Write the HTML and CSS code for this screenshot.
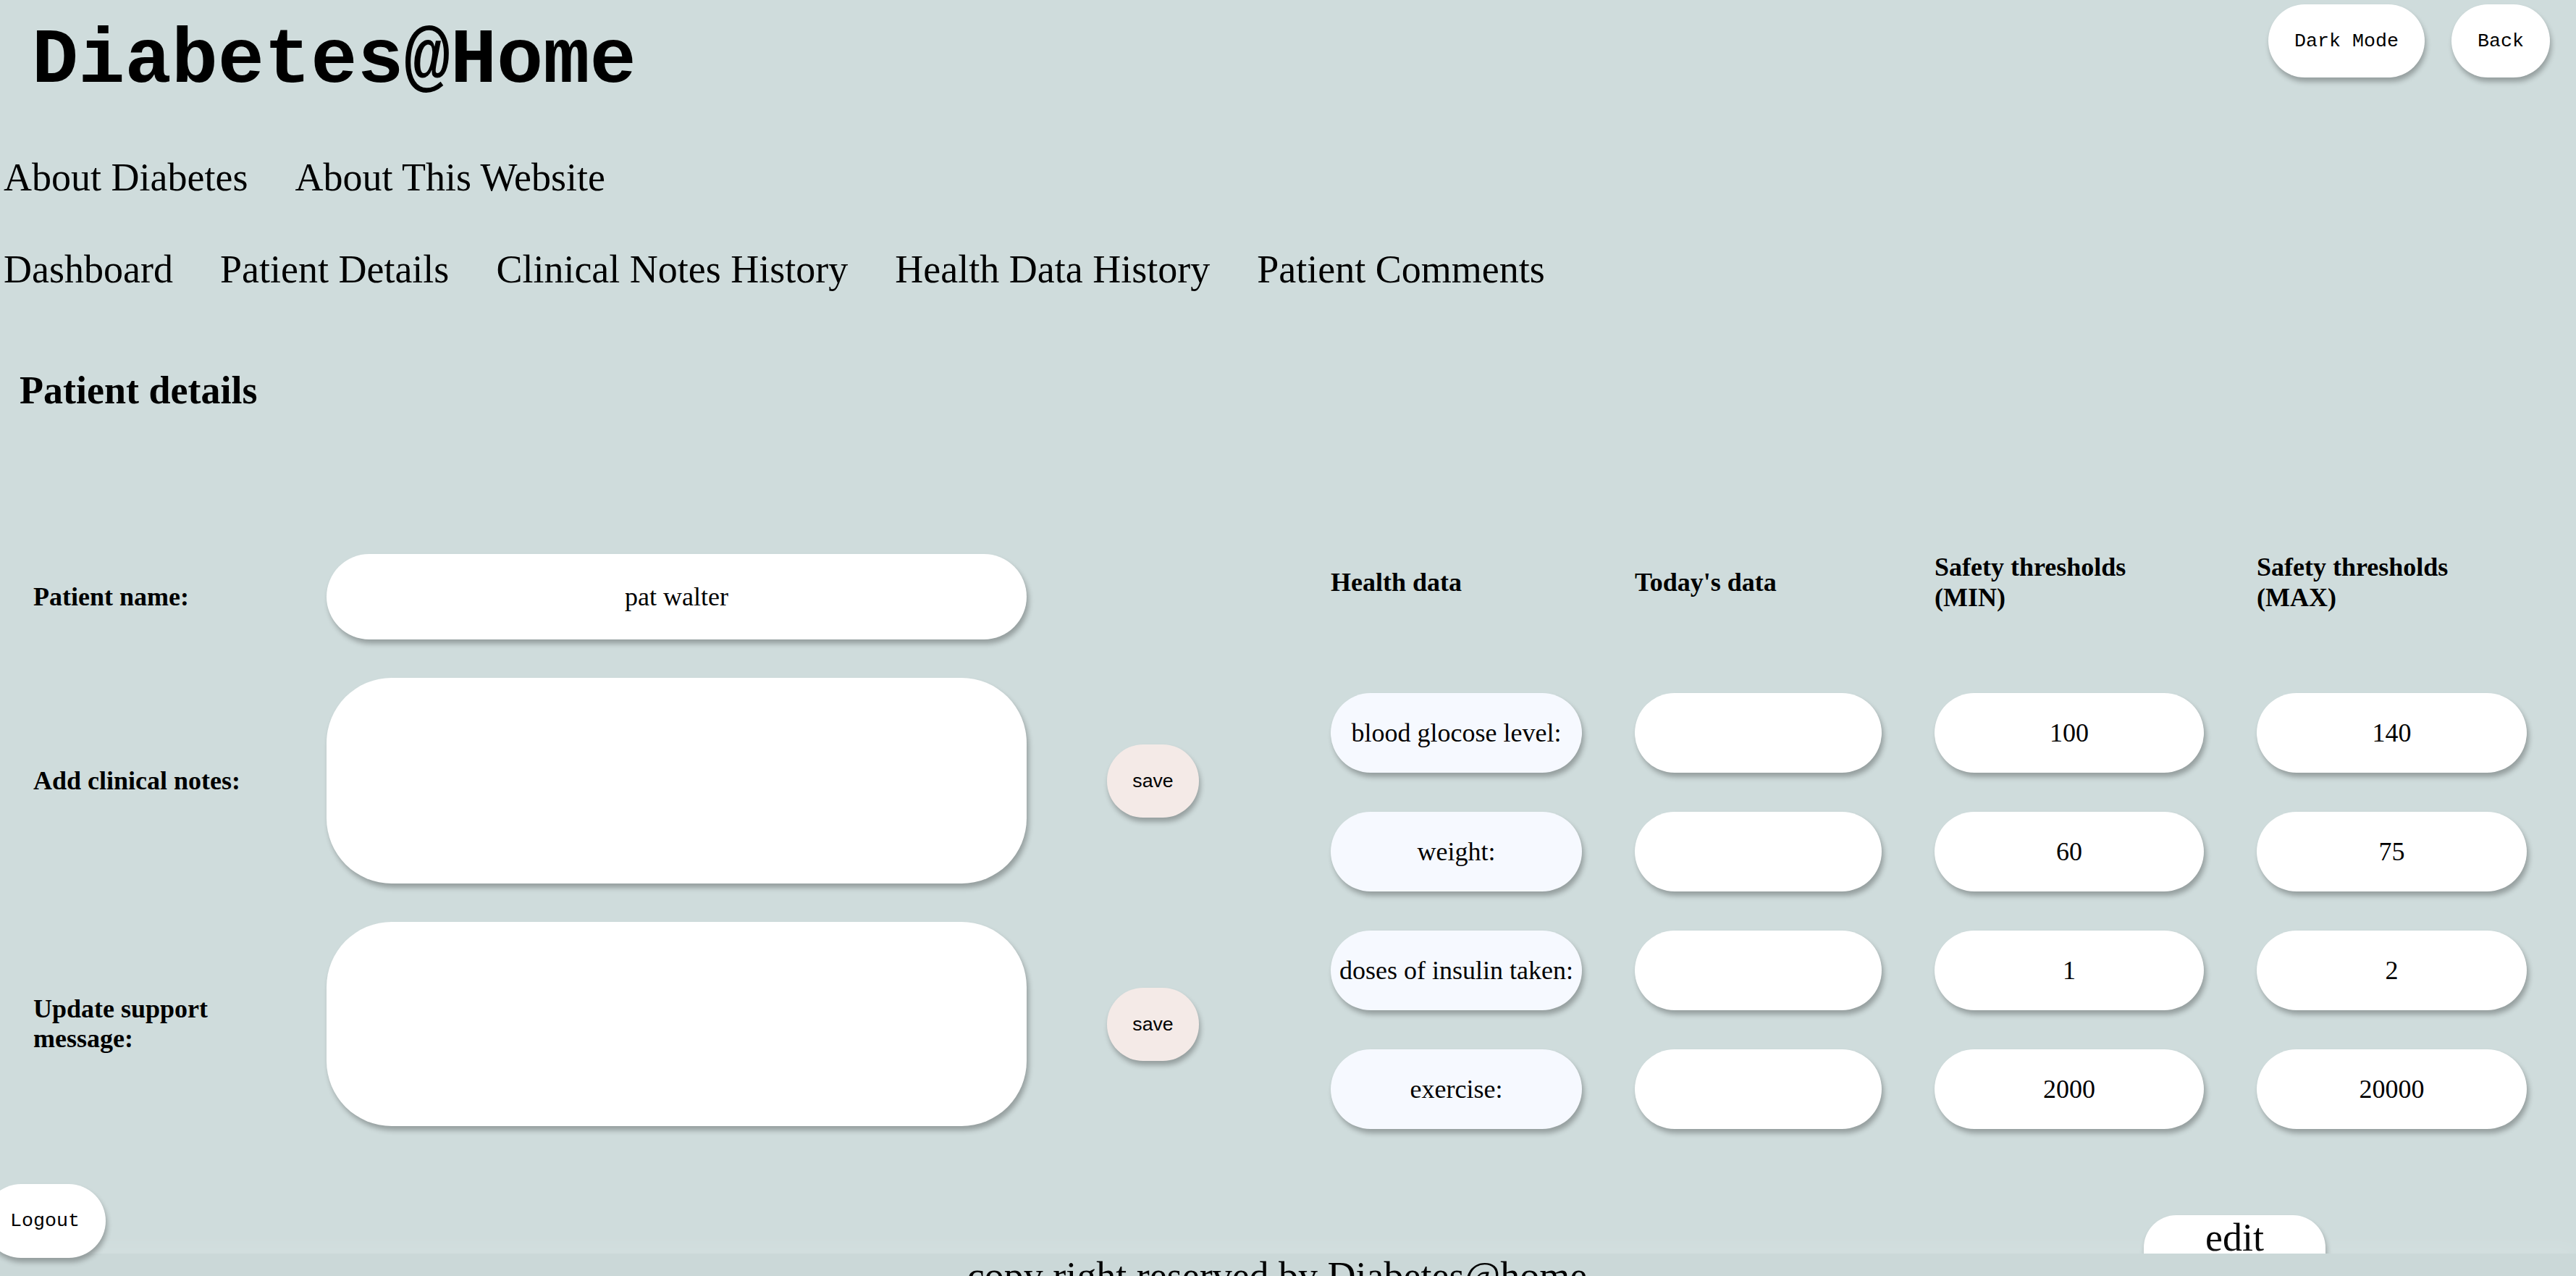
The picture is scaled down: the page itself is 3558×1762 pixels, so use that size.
FILE: index.html
```html
<!DOCTYPE html>
<html lang="en">
<head>
<meta charset="utf-8">
<title>Diabetes@Home - Patient details</title>
<link rel="stylesheet" href="styles.css">
</head>
<body>
<header class="topbar">
  <h1 class="brand">Diabetes@Home</h1>
  <div class="top-actions">
    <button class="pill-btn">Dark Mode</button>
    <button class="pill-btn">Back</button>
  </div>
</header>

<nav class="nav nav-main">
  <a href="#">About Diabetes</a>
  <a href="#">About This Website</a>
</nav>

<nav class="nav nav-sub">
  <a href="#">Dashboard</a>
  <a href="#">Patient Details</a>
  <a href="#">Clinical Notes History</a>
  <a href="#">Health Data History</a>
  <a href="#">Patient Comments</a>
</nav>

<h2 class="section-title">Patient details</h2>

<main class="details">
  <form class="notes-form">
    <label class="field-label">Patient name:</label>
    <input class="field field-name" type="text" value="pat walter">
    <span class="empty"></span>

    <label class="field-label">Add clinical notes:</label>
    <textarea class="field field-area"></textarea>
    <button class="save-btn" type="button">save</button>

    <label class="field-label">Update support message:</label>
    <textarea class="field field-area"></textarea>
    <button class="save-btn" type="button">save</button>
  </form>

  <div class="health-table">
    <div class="th">Health data</div>
    <div class="th">Today's data</div>
    <div class="th th-wrap">Safety thresholds (MIN)</div>
    <div class="th th-wrap">Safety thresholds (MAX)</div>

    <div class="cell cell-label">blood glocose level:</div>
    <input class="cell" type="text" value="">
    <input class="cell" type="text" value="100">
    <input class="cell" type="text" value="140">

    <div class="cell cell-label">weight:</div>
    <input class="cell" type="text" value="">
    <input class="cell" type="text" value="60">
    <input class="cell" type="text" value="75">

    <div class="cell cell-label">doses of insulin taken:</div>
    <input class="cell" type="text" value="">
    <input class="cell" type="text" value="1">
    <input class="cell" type="text" value="2">

    <div class="cell cell-label">exercise:</div>
    <input class="cell" type="text" value="">
    <input class="cell" type="text" value="2000">
    <input class="cell" type="text" value="20000">
  </div>
</main>

<div class="bottom-bar">
  <button class="pill-btn logout">Logout</button>
  <button class="edit-btn">edit</button>
</div>

<footer class="site-footer">copy right reserved by Diabetes@home</footer>
</body>
</html>
```

FILE: styles.css
```css
html, body {
  margin: 0;
  padding: 0;
  overflow: hidden;
}

body {
  background: #cfdcdc;
  color: #000;
  font-family: "Liberation Serif", "Times New Roman", serif;
  height: 1762px;
}

/* ---------- header ---------- */
.topbar {
  display: flex;
  justify-content: space-between;
  align-items: flex-start;
  padding: 6px 36px 0 44px;
}

.brand {
  margin: 14.5px 0 0 0;
  font-family: "Liberation Mono", "Courier New", monospace;
  font-weight: bold;
  font-size: 107px;
  line-height: 128px;
}

.top-actions {
  display: flex;
  gap: 37px;
}

.pill-btn {
  height: 101px;
  padding: 0 36px;
  border: none;
  border-radius: 51px;
  background: #fff;
  color: #000;
  font-family: "Liberation Mono", "Courier New", monospace;
  font-size: 26.67px;
  box-shadow: 2px 6px 7px rgba(0, 0, 0, 0.28);
}

/* ---------- navigation ---------- */
.nav {
  display: flex;
  gap: 65px;
  padding-left: 5px;
  font-size: 54px;
  line-height: 62px;
}

.nav a {
  color: #000;
  text-decoration: none;
}

.nav-main {
  margin-top: 65.5px;
}

.nav-sub {
  margin-top: 65px;
}

.section-title {
  margin: 105px 0 0 0;
  padding-left: 27px;
  font-size: 54px;
  line-height: 62px;
  font-weight: bold;
}

/* ---------- main ---------- */
.details {
  display: flex;
  align-items: flex-start;
  gap: 182px;
  padding-left: 46px;
  margin-top: 192px;
}

.notes-form {
  margin-top: 3px;
  display: grid;
  grid-template-columns: 405px 967px auto;
  grid-template-rows: 118px 284px 282px;
  row-gap: 53px;
  align-items: center;
}

.field-label {
  max-width: 330px;
  font-weight: bold;
  font-size: 36px;
  line-height: 41px;
}

.field {
  box-sizing: border-box;
  width: 967px;
  height: 100%;
  border: none;
  outline: none;
  background: #fff;
  color: #000;
  font-family: "Liberation Serif", "Times New Roman", serif;
  font-size: 36px;
  box-shadow: 3px 6px 7px rgba(0, 0, 0, 0.28);
}

.field-name {
  border-radius: 60px;
  text-align: center;
  padding: 0;
}

.field-area {
  border-radius: 90px;
  resize: none;
  padding: 20px 40px;
}

.save-btn {
  margin-left: 111px;
  width: 127px;
  height: 101px;
  border: none;
  border-radius: 50px;
  background: #f4eae7;
  color: #000;
  font-family: "Liberation Sans", Arial, sans-serif;
  font-size: 26.67px;
  box-shadow: 2px 6px 7px rgba(0, 0, 0, 0.28);
}

/* ---------- health table ---------- */
.health-table {
  display: grid;
  grid-template-columns: 347px 341px 372px 373px;
  grid-auto-rows: 110px;
  grid-template-rows: auto;
  column-gap: 73px;
  row-gap: 54px;
  align-items: center;
}

.th {
  font-weight: bold;
  font-size: 36px;
  line-height: 42px;
  margin-bottom: 57px;
  align-self: center;
}

.th-wrap {
  max-width: 300px;
}

.cell {
  box-sizing: border-box;
  height: 110px;
  width: 100%;
  border: none;
  outline: none;
  border-radius: 55px;
  background: #fff;
  color: #000;
  font-family: "Liberation Serif", "Times New Roman", serif;
  font-size: 36px;
  text-align: center;
  padding: 0;
  box-shadow: 3px 6px 7px rgba(0, 0, 0, 0.28);
}

.cell-label {
  display: flex;
  align-items: center;
  justify-content: center;
  background: #f6f9ff;
  white-space: nowrap;
}

/* ---------- bottom ---------- */
.bottom-bar {
  display: flex;
  align-items: flex-start;
  height: 96px;
  margin-top: 76px;
}

.logout {
  position: relative;
  z-index: 2;
  margin-left: -22px;
  height: 102px;
}

.edit-btn {
  margin-left: auto;
  margin-right: 346px;
  margin-top: 43px;
  width: 251px;
  height: 100px;
  padding: 0;
  border: none;
  border-radius: 45px;
  background: #fff;
  color: #000;
  font-family: "Liberation Serif", "Times New Roman", serif;
  font-size: 54px;
  line-height: 62px;
  display: flex;
  justify-content: center;
  align-items: flex-start;
  box-shadow: 2px 6px 7px rgba(0, 0, 0, 0.28);
}

.site-footer {
  position: relative;
  z-index: 1;
  background: #cbd8d8;
  box-shadow: 0 -14px 20px rgba(255, 255, 255, 0.08);
  text-align: center;
  padding-right: 30px;
  font-size: 54px;
  line-height: 62px;
  height: 100px;
}
```
